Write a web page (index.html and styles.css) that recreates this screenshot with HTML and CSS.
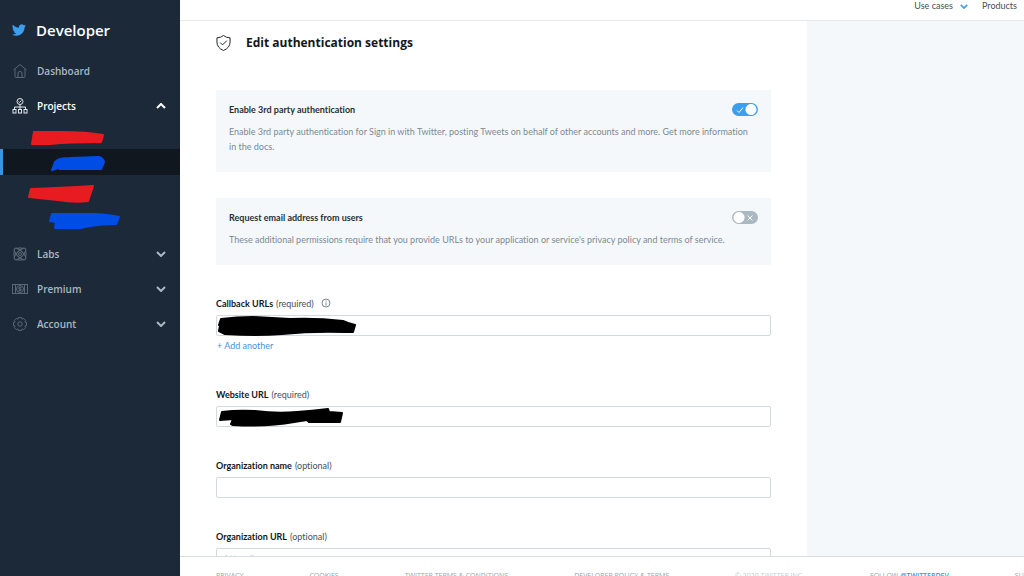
FILE: index.html
```html
<!DOCTYPE html>
<html lang="en">
<head>
  <meta charset="UTF-8">
  <meta name="viewport" content="width=device-width, initial-scale=1.0">
  <title>Edit authentication settings</title>
  <link rel="stylesheet" href="styles.css">
</head>
<body>
  <!-- Sidebar -->
  <aside class="sidebar">
    <a class="brand" href="#">
      <svg class="brand-icon" viewBox="0 0 24 24"><path d="M23.95 4.57a10 10 0 0 1-2.82.78 4.96 4.96 0 0 0 2.16-2.73c-.95.56-2 .96-3.13 1.19a4.92 4.92 0 0 0-8.38 4.48C7.69 8.1 4.07 6.13 1.64 3.16a4.92 4.92 0 0 0 1.52 6.57 4.9 4.9 0 0 1-2.23-.61v.06a4.92 4.92 0 0 0 3.95 4.83 5 5 0 0 1-2.21.08 4.94 4.94 0 0 0 4.6 3.42A9.87 9.87 0 0 1 0 19.54a14 14 0 0 0 7.55 2.21c9.05 0 14-7.5 14-13.98 0-.21 0-.42-.02-.63a9.94 9.94 0 0 0 2.42-2.57z"/></svg>
      Developer
    </a>
    <ul class="nav">
      <li>
        <a class="nav-row" href="#">
          <svg class="nav-icon" viewBox="0 0 16 16"><path d="M1.500 7 8 1.500 14.500 7M3 6v7.500q0 1 1 1h8q1 0 1-1V6M6 14.500V10q0-1.500 2-1.500t2 1.500v4.500"/></svg>
          <span>Dashboard</span>
        </a>
      </li>
      <li>
        <button class="nav-row open" type="button">
          <svg class="nav-icon" viewBox="0 0 16 16"><circle cx="8" cy="3.500" r="3"/><path d="m6.500 3.500 1 1 2-2M8 6.500v5M2.500 11.500V9h11v2.500"/><rect x="1" y="11.500" width="3" height="3.500"/><rect x="6.500" y="11.500" width="3" height="3.500"/><rect x="12" y="11.500" width="3" height="3.500"/></svg>
          <span>Projects</span>
          <svg class="chevron" viewBox="0 0 10 6"><path d="m1 5 4-4 4 4"/></svg>
        </button>
        <ul class="subnav">
          <li><a href="#" aria-label="Project one"><svg class="mark red" viewBox="0 0 180 26"><path d="M34 9 62 9Q86 9 103 12L101 19Q70 19 50 21L32 21Z"/></svg></a></li>
          <li class="active"><a href="#" aria-label="App one"><svg class="mark blue" viewBox="0 0 180 26"><path d="M55 13Q58 9 70 9L99 8Q103 9 104 13L101 20 60 20 58 19 52 21Z"/></svg></a></li>
          <li class="second"><a href="#" aria-label="Project two"><svg class="mark red" viewBox="0 0 180 26"><path d="M31 8Q60 7 93 5L88 20Q75 22 58 19L29 16Z"/></svg></a></li>
          <li><a href="#" aria-label="App two"><svg class="mark blue" viewBox="0 0 180 26"><path d="M52 7 95 7Q110 8 119 10L116 17Q98 17 80 21L55 21 56 15 50 14Z"/></svg></a></li>
        </ul>
      </li>
      <li>
        <button class="nav-row" type="button">
          <svg class="nav-icon" viewBox="0 0 16 16"><ellipse cx="8" cy="8" rx="7.500" ry="3" transform="rotate(45 8 8)"/><ellipse cx="8" cy="8" rx="7.500" ry="3" transform="rotate(-45 8 8)"/><circle cx="8" cy="8" r="1.500"/><path d="M5 2.500q3-1.500 6 0M5 13.500q3 1.500 6 0M2.500 5q-1.500 3 0 6M13.500 5q1.500 3 0 6"/></svg>
          <span>Labs</span>
          <svg class="chevron" viewBox="0 0 10 6"><path d="m1 1 4 4 4-4"/></svg>
        </button>
      </li>
      <li>
        <button class="nav-row" type="button">
          <svg class="nav-icon" viewBox="0 0 16 16"><rect x=".5" y="3.500" width="15" height="9"/><path d="M3.500 4v8M12.500 4v8M9.500 6.500h-2q-1 0-1 .75t1 .75h1q1 0 1 .75t-1 .75h-2M8 5.500v5"/><circle cx="8" cy="8" r="3.500"/></svg>
          <span>Premium</span>
          <svg class="chevron" viewBox="0 0 10 6"><path d="m1 1 4 4 4-4"/></svg>
        </button>
      </li>
      <li>
        <button class="nav-row" type="button">
          <svg class="nav-icon" viewBox="0 0 16 16"><circle cx="8" cy="8" r="2.200"/><path d="M6.500 1.500h3l.5 1.700 1.700-.8 2 2-.8 1.700 1.600.4v3l-1.600.5.8 1.700-2 2-1.700-.8-.5 1.600h-3l-.5-1.600-1.700.8-2-2 .8-1.700-1.600-.5v-3l1.600-.4-.8-1.700 2-2 1.700.8z"/></svg>
          <span>Account</span>
          <svg class="chevron" viewBox="0 0 10 6"><path d="m1 1 4 4 4-4"/></svg>
        </button>
      </li>
    </ul>
  </aside>

  <div class="page">
    <header class="topbar">
      <a href="#">Use cases <svg class="caret" viewBox="0 0 10 6"><path d="m1 1 4 4 4-4"/></svg></a>
      <a href="#">Products <svg class="caret" viewBox="0 0 10 6"><path d="m1 1 4 4 4-4"/></svg></a>
    </header>

    <div class="columns">
      <main class="content">
        <h1>
          <svg class="shield" viewBox="0 0 16 18"><path d="M8 1q3 2.500 7 2.500V8q0 6-7 9-7-3-7-9V3.500Q5 3.500 8 1zM4.500 8.500 7 11l4.500-4.500"/></svg>
          Edit authentication settings
        </h1>

        <!-- Permission cards -->
        <section class="card">
          <div class="card-head">
            <label for="thirdParty">Enable 3rd party authentication</label>
            <span class="switch">
              <input type="checkbox" id="thirdParty" checked>
              <svg class="switch-on" viewBox="0 0 8 8"><path d="m1 4.500 2 2 4-5"/></svg>
              <svg class="switch-off" viewBox="0 0 8 8"><path d="m1.500 1.500 5 5m0-5-5 5"/></svg>
            </span>
          </div>
          <p>Enable 3rd party authentication for Sign in with Twitter, posting Tweets on behalf of other accounts and more. Get more information in the <a href="#">docs</a>.</p>
        </section>

        <section class="card">
          <div class="card-head">
            <label for="requestEmail">Request email address from users</label>
            <span class="switch">
              <input type="checkbox" id="requestEmail">
              <svg class="switch-on" viewBox="0 0 8 8"><path d="m1 4.500 2 2 4-5"/></svg>
              <svg class="switch-off" viewBox="0 0 8 8"><path d="m1.500 1.500 5 5m0-5-5 5"/></svg>
            </span>
          </div>
          <p>These additional permissions require that you provide URLs to your application or service's privacy policy and terms of service.</p>
        </section>

        <!-- URL fields -->
        <form class="fields">
          <div class="field">
            <label for="callback"><b>Callback URLs</b> (required)
              <svg class="info" viewBox="0 0 10 10"><circle cx="5" cy="5" r="4"/><path d="M5 4.500v3M5 2.500v1"/></svg>
            </label>
            <div class="control">
              <input type="text" id="callback">
              <svg class="scribble" viewBox="0 0 140 21"><path d="M4 4Q20 2 36 2L73 4Q100 3 126 6L131 8 138 10 136 17 128 17Q95 16 65 19 40 21 8 19L2 16 3 11 2 10Z"/></svg>
            </div>
            <button class="add" type="button">+ Add another</button>
          </div>
          <div class="field">
            <label for="website"><b>Website URL</b> (required)</label>
            <div class="control">
              <input type="text" id="website">
              <svg class="scribble" viewBox="0 0 140 21"><path d="M5 6Q20 4 38 5 60 8 80 6 95 5 111 3L112 6 125 7 123 16 92 16 90 14 77 16Q50 21 16 19L14 18 16 13 3 14Z"/></svg>
            </div>
          </div>
          <div class="field">
            <label for="orgName"><b>Organization name</b> (optional)</label>
            <div class="control"><input type="text" id="orgName"></div>
          </div>
          <div class="field">
            <label for="orgUrl"><b>Organization URL</b> (optional)</label>
            <div class="control"><input type="text" id="orgUrl" placeholder="https://"></div>
          </div>
        </form>
      </main>
      <div class="side-panel"></div>
    </div>

    <footer class="footer">
      <a href="#">PRIVACY</a>
      <a href="#">COOKIES</a>
      <a href="#">TWITTER TERMS &amp; CONDITIONS</a>
      <a href="#">DEVELOPER POLICY &amp; TERMS</a>
      <span class="copyright">© 2020 TWITTER INC.</span>
      <span>FOLLOW <a class="handle" href="#">@TWITTERDEV</a></span>
      <a href="#">SUBSCRIBE</a>
    </footer>
  </div>
</body>
</html>
```
FILE: styles.css
```css
* { box-sizing: border-box; }
body {
  margin: 0;
  height: 100vh;
  display: flex;
  overflow: hidden;
  font-family: Lato, "Open Sans", sans-serif;
  font-size: 9px;
  font-variant-ligatures: none;
  color: #14171a;
  background: #fff;
}
a { text-decoration: none; color: inherit; }
ul { list-style: none; margin: 0; padding: 0; }
button {
  font: inherit;
  color: inherit;
  border: none;
  background: none;
  padding: 0;
  cursor: pointer;
}
svg {
  fill: none;
  stroke: currentColor;
  flex: none;
}
.sidebar, h1, .footer { font-family: "Open Sans", sans-serif; }

/* Sidebar */
.sidebar {
  width: 180px;
  flex: none;
  background: #1c2938;
  color: #aab8c2;
}
.brand {
  display: flex;
  align-items: center;
  gap: 10px;
  height: 54px;
  padding: 6px 0 0 12px;
  font-size: 15px;
  font-weight: 600;
  color: #fff;
}
.brand-icon {
  width: 14px;
  height: 14px;
  fill: #3b9fee;
  stroke: none;
}
.nav { display: grid; gap: 1px; }
.nav-row {
  display: flex;
  align-items: center;
  gap: 9px;
  width: 100%;
  height: 34px;
  padding: 0 14px 0 12px;
  font-size: 10px;
  font-weight: 600;
}
.nav-row.open { color: #fff; }
.nav-icon { width: 16px; height: 16px; color: #5a6874; }
.open .nav-icon { color: #e1e8ed; }
.chevron {
  width: 10px;
  height: 6px;
  margin-left: auto;
  stroke-width: 2;
}
.subnav { padding-bottom: 3px; }
.subnav li { height: 26px; }
.subnav a { display: block; }
.subnav .active {
  background: #10171e;
  box-shadow: inset 3px 0 #3b94d9;
}
.subnav .second { margin-top: 6px; }
.mark {
  display: block;
  width: 100%;
  height: 26px;
  stroke-width: 2;
  stroke-linejoin: round;
}
.red { fill: #e81c20; stroke: #e81c20; }
.blue { fill: #004de6; stroke: #004de6; }

/* Page */
.page {
  flex: 1;
  min-width: 0;
  display: flex;
  flex-direction: column;
}
.topbar {
  display: flex;
  justify-content: flex-end;
  align-items: flex-start;
  gap: 14px;
  height: 21px;
  flex: none;
  overflow: hidden;
  border-bottom: 1px solid #e6e9eb;
  color: #44505a;
  line-height: 12px;
}
.topbar a { display: flex; align-items: center; gap: 7px; }
.topbar a:last-child { margin-right: -8px; }
.caret {
  width: 8px;
  height: 5px;
  stroke: #3b9fee;
  stroke-width: 2;
}
.columns {
  flex: 1;
  min-height: 0;
  display: flex;
  overflow: hidden;
}
.content { flex: 1; padding: 12px 36px 0; }
.side-panel { width: 217px; background: #f5f8fa; }
h1 {
  display: flex;
  align-items: center;
  gap: 15px;
  margin: 0 0 37px;
  font-size: 12px;
  line-height: 20px;
  font-weight: 700;
}
.shield { width: 15px; height: 18px; }

/* Cards */
.card {
  margin-bottom: 26px;
  padding: 13px 13px 18px;
  background: #f5f8fa;
}
.card-head {
  display: flex;
  justify-content: space-between;
  align-items: center;
  height: 13px;
  font-weight: 700;
  color: #292f33;
}
.card p {
  margin: 8px 0 0;
  padding-right: 4px;
  line-height: 15px;
  color: #7b8a93;
}
.card a, .add { color: #4a90d9; }
.switch {
  position: relative;
  width: 26px;
  height: 13px;
}
.switch input {
  appearance: none;
  display: block;
  width: 26px;
  height: 13px;
  margin: 0;
  border-radius: 7px;
  background: radial-gradient(circle at 7px 50%, #fff 5px, transparent 6px) #aab8c2;
}
.switch input:checked {
  background: radial-gradient(circle at 19px 50%, #fff 5px, transparent 6px) #3b9fee;
}
.switch svg {
  position: absolute;
  top: 3px;
  width: 8px;
  height: 8px;
  color: #fff;
  pointer-events: none;
}
.switch-on { left: 4px; }
.switch-off { right: 4px; }
.switch input:checked ~ .switch-off,
.switch input:not(:checked) ~ .switch-on { display: none; }

/* Fields */
.fields { padding-top: 6px; }
.field { margin-bottom: 32px; }
.field label {
  display: flex;
  align-items: center;
  gap: 3px;
  height: 12px;
  margin-bottom: 6px;
  color: #44505a;
}
.field b { color: #14171a; }
.info { width: 10px; height: 10px; margin-left: 4px; color: #7b8a93; }
.control { position: relative; }
.control input {
  display: block;
  width: 100%;
  height: 21px;
  padding: 0 8px;
  border: 1px solid #d3d9dd;
  border-radius: 2px;
  font: inherit;
}
.control input::placeholder { color: #aab8c2; }
.scribble {
  position: absolute;
  top: 0;
  left: 1px;
  width: 140px;
  height: 21px;
  fill: #000;
  stroke: #000;
  stroke-width: 2;
  stroke-linejoin: round;
  overflow: visible;
}
.add { display: block; height: 20px; line-height: 20px; margin-left: 1px; }

/* Footer */
.footer {
  display: flex;
  gap: 66px;
  height: 20px;
  flex: none;
  padding: 14px 0 0 36px;
  overflow: hidden;
  border-top: 1px solid #d9dee1;
  font-size: 7px;
  line-height: 10px;
  white-space: nowrap;
  color: #97a3ab;
}
.copyright { color: #c3ccd2; }
.handle { color: #4a90d9; font-weight: 600; }
```
